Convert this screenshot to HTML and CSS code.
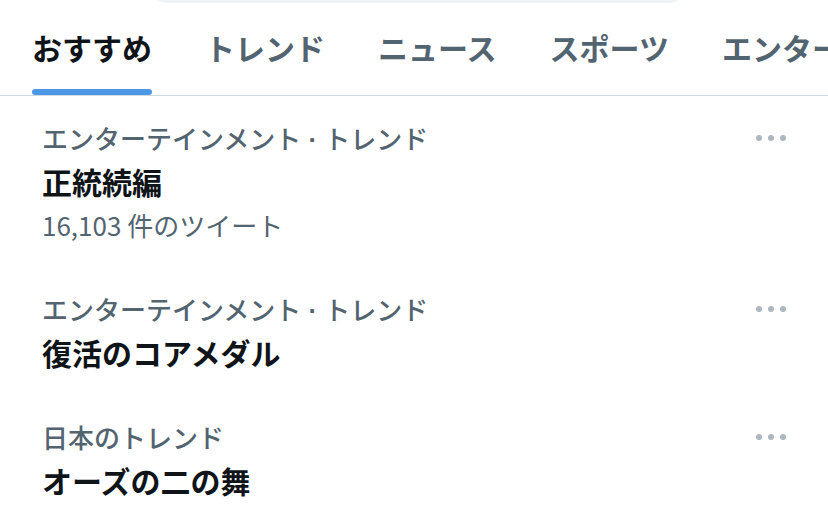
FILE: index.html
```html
<!DOCTYPE html>
<html lang="ja">
<head>
  <meta charset="UTF-8">
  <meta name="viewport" content="width=device-width, initial-scale=1.0">
  <title>話題を検索</title>
  <link rel="stylesheet" href="styles.css">
</head>
<body>
  <div class="search"></div>

  <nav class="tabs">
    <a class="tab active"><span class="tab-label">おすすめ</span></a>
    <a class="tab"><span class="tab-label">トレンド</span></a>
    <a class="tab"><span class="tab-label">ニュース</span></a>
    <a class="tab"><span class="tab-label">スポーツ</span></a>
    <a class="tab"><span class="tab-label">エンターテインメント</span></a>
  </nav>

  <ul class="trends">
    <li class="trend">
      <div class="trend-body">
        <div class="trend-meta">エンターテインメント<span class="sep"> · </span>トレンド</div>
        <div class="trend-name">正統続編</div>
        <div class="trend-count">16,103 件のツイート</div>
      </div>
      <button class="more" aria-label="その他">
        <svg width="30" height="8" viewBox="0 0 30 8"><circle cx="3" cy="4" r="3"/><circle cx="15" cy="4" r="3"/><circle cx="27" cy="4" r="3"/></svg>
      </button>
    </li>
    <li class="trend">
      <div class="trend-body">
        <div class="trend-meta">エンターテインメント<span class="sep"> · </span>トレンド</div>
        <div class="trend-name">復活のコアメダル</div>
      </div>
      <button class="more" aria-label="その他">
        <svg width="30" height="8" viewBox="0 0 30 8"><circle cx="3" cy="4" r="3"/><circle cx="15" cy="4" r="3"/><circle cx="27" cy="4" r="3"/></svg>
      </button>
    </li>
    <li class="trend">
      <div class="trend-body">
        <div class="trend-meta">日本のトレンド</div>
        <div class="trend-name">オーズの二の舞</div>
      </div>
      <button class="more" aria-label="その他">
        <svg width="30" height="8" viewBox="0 0 30 8"><circle cx="3" cy="4" r="3"/><circle cx="15" cy="4" r="3"/><circle cx="27" cy="4" r="3"/></svg>
      </button>
    </li>
  </ul>
</body>
</html>
```

FILE: styles.css
```css
body {
  margin: 0;
  background: #fff;
  color: #0f1419;
  font-family: "Noto Sans CJK JP", "Noto Sans", sans-serif;
  overflow: hidden;
}

.search {
  width: 540px;
  height: 40px;
  margin: -37px 0 -3px 148px;
  background-color: #eff3f4;
  border-radius: 20px;
}

.tabs {
  display: flex;
  gap: 53px;
  padding-left: 32px;
  border-bottom: 1px solid #d4d9dd;
  white-space: nowrap;
  overflow: hidden;
}

.tab {
  display: flex;
  flex-direction: column;
  flex-shrink: 0;
  font-size: 30px;
  font-weight: 700;
  color: #536471;
}

.tab-label {
  padding-top: 26px;
  line-height: 42px;
}

.tab::after {
  content: "";
  height: 6px;
  margin-top: 21px;
  border-radius: 3px;
}

.tab.active {
  color: #0f1419;
}

.tab.active::after {
  background-color: #4c97e6;
}

.trends {
  list-style: none;
  margin: 0;
  padding: 0;
}

.trend {
  display: flex;
  align-items: flex-start;
  padding: 20px 42px 21px 42px;
}

.trend-body {
  flex: 1;
}

.trend-meta {
  font-size: 26px;
  line-height: 44px;
  color: #536471;
  font-weight: 500;
}

.sep {
  font-family: "Liberation Sans", sans-serif;
  font-weight: 700;
  line-height: 1;
}

.trend-name {
  font-size: 30px;
  line-height: 43px;
  font-weight: 700;
}

.trend-count {
  font-size: 26px;
  line-height: 43px;
  color: #536471;
}

.more {
  display: flex;
  align-items: center;
  height: 44px;
  padding: 0;
  border: 0;
  background: none;
  fill: #aeb6bf;
}
```
